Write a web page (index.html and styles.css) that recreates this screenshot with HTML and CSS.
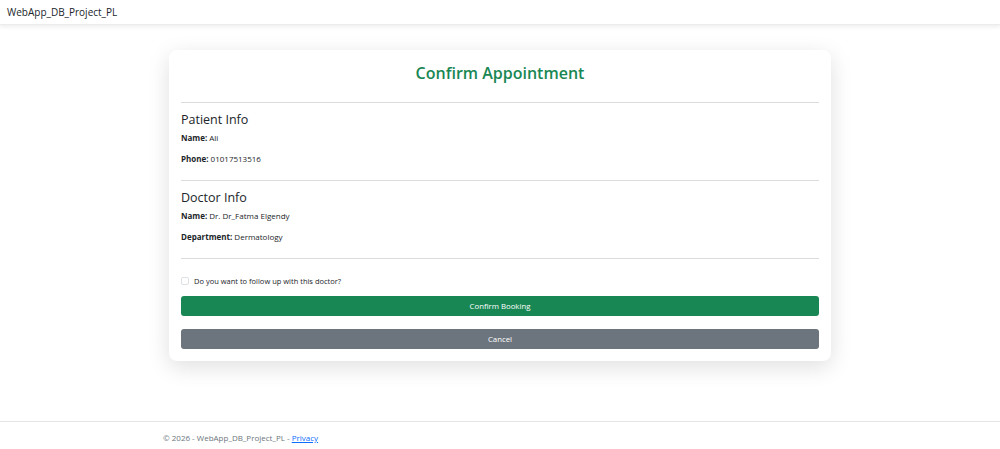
FILE: index.html
```html
<!DOCTYPE html>
<html lang="en">
<head>
    <meta charset="UTF-8">
    <meta name="viewport" content="width=device-width, initial-scale=1.0">
    <title>Confirm Appointment - WebApp_DB_Project_PL</title>
    <link rel="stylesheet" href="styles.css">
</head>
<body>
    <header class="navbar">
        <a class="brand" href="#">WebApp_DB_Project_PL</a>
    </header>

    <main class="page">
        <div class="card">
            <h2 class="card-title">Confirm Appointment</h2>
            <hr class="sep">

            <h4 class="section">Patient Info</h4>
            <p class="info"><b>Name:</b> Ali</p>
            <p class="info"><b>Phone:</b> 01017513516</p>
            <hr class="sep">

            <h4 class="section">Doctor Info</h4>
            <p class="info"><b>Name:</b> Dr. Dr_Fatma Elgendy</p>
            <p class="info"><b>Department:</b> Dermatology</p>
            <hr class="sep">

            <form class="booking">
                <label class="check">
                    <input type="checkbox" class="check-box">
                    <span>Do you want to follow up with this doctor?</span>
                </label>
                <button type="submit" class="btn btn-success">Confirm Booking</button>
                <button type="button" class="btn btn-secondary">Cancel</button>
            </form>
        </div>
    </main>

    <footer class="footer">
        <div class="footer-inner">
            &copy; 2026 - WebApp_DB_Project_PL - <a href="#">Privacy</a>
        </div>
    </footer>
</body>
</html>
```

FILE: styles.css
```css
body {
    margin: 0;
    font-family: "Open Sans", "Noto Sans", sans-serif;
    color: #212529;
    background-color: #fff;
}

.navbar {
    height: 24px;
    display: flex;
    align-items: center;
    padding: 0 7px;
    background-color: #fff;
    box-shadow: 0 2px 4px rgba(0, 0, 0, 0.07);
    border-bottom: 1px solid #ececec;
}

.brand {
    font-size: 10px;
    color: #212529;
    text-decoration: none;
}

.page {
    display: flex;
    justify-content: center;
    padding-top: 25px;
    height: 396px;
    box-sizing: border-box;
}

.card {
    width: 662px;
    height: 311px;
    box-sizing: border-box;
    padding: 12px 12px;
    background-color: #fff;
    border-radius: 8px;
    box-shadow: 0 6px 22px rgba(0, 0, 0, 0.13);
}

.card-title {
    margin: 0;
    text-align: center;
    color: #198754;
    font-size: 16px;
    font-weight: 600;
    line-height: 22px;
}

.sep {
    margin: 18px 0 9px;
    border: 0;
    border-top: 1px solid #dcdcdc;
}

.section {
    margin: 0 0 5px;
    font-size: 12.5px;
    font-weight: 500;
    line-height: 16px;
}

.info {
    margin: 0 0 11px;
    font-size: 8px;
    line-height: 10px;
}

.info b {
    font-weight: 700;
}

.info + .sep {
    margin-top: 16px;
}

.booking {
    display: flex;
    flex-direction: column;
    padding-top: 8px;
}

.check {
    display: flex;
    align-items: center;
    gap: 5px;
    font-size: 7.5px;
    line-height: 10px;
    margin-bottom: 10px;
}

.check-box {
    appearance: none;
    width: 8px;
    height: 8px;
    margin: 0;
    border: 1px solid #dee2e6;
    border-radius: 2px;
    background: #fff;
}

.btn {
    height: 20px;
    border: none;
    border-radius: 3px;
    color: #fff;
    font-family: inherit;
    font-size: 7.8px;
    cursor: pointer;
}

.btn-success {
    background-color: #198754;
    margin-bottom: 13px;
}

.btn-secondary {
    background-color: #6c757d;
}

.footer {
    border-top: 1px solid #e5e5e5;
    height: 27px;
}

.footer-inner {
    padding: 10px 0 0 163px;
    font-size: 8px;
    color: #6c757d;
}

.footer-inner a {
    color: #0d6efd;
}
```
